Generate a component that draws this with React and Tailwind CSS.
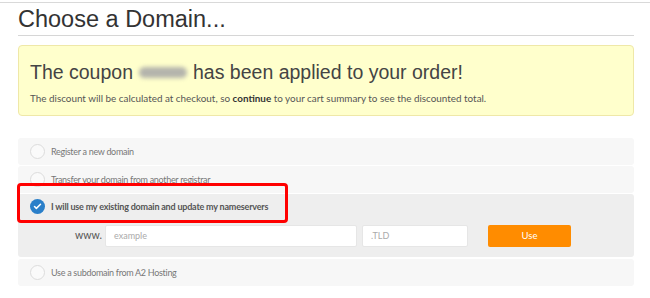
import { Check } from 'lucide-react';

const sans = { fontFamily: '"Liberation Sans", Arial, sans-serif' };
const body = { fontFamily: 'Lato, "Open Sans", sans-serif' };

function Radio({ checked }) {
  if (checked) {
    return (
      <div className="w-[15px] h-[15px] rounded-full bg-[#2a7fc9] flex items-center justify-center shrink-0">
        <Check className="w-[9px] h-[9px] text-white" strokeWidth={4} />
      </div>
    );
  }
  return <div className="w-[15px] h-[15px] rounded-full border border-[#dcdcdc] bg-[#fafafa] shrink-0" />;
}

function OptionRow({ label }) {
  return (
    <div className="h-[27px] bg-[#f7f7f7] rounded-[3px] flex items-center pl-[12px] gap-[6px]">
      <Radio />
      <span className="text-[9px] tracking-[-0.3px] text-[#777]">{label}</span>
    </div>
  );
}

export default function App() {
  return (
    <div className="w-[650px] h-[298px] bg-white overflow-hidden pt-[2px]" style={body}>
      <div className="border-t border-[#d9d9d9]" />
      <div className="ml-[18px] w-[616px]">
        <h1
          className="h-[33px] leading-[32px] text-[23.5px] text-[#333] border-b border-[#d6d6d6]"
          style={sans}
        >
          Choose a Domain...
        </h1>

        <div className="mt-[9px] h-[71px] border border-[#efe8a8] bg-[#ffffcc] rounded-[4px] pl-[11px] pt-[14px]">
          <div className="text-[19.5px] leading-[24px] text-[#444] flex items-center" style={sans}>
            <span>The coupon</span>
            <span className="mx-[6px] w-[48px] h-[11px] bg-[#b4b4ac] rounded-full blur-[2px]" />
            <span>has been applied to your order!</span>
          </div>
          <p className="mt-[8px] text-[9.9px] leading-[12px] text-[#555]">
            The discount will be calculated at checkout, so <b className="text-[#333]">continue</b> to your
            cart summary to see the discounted total.
          </p>
        </div>

        <div className="mt-[22px] flex flex-col">
          <OptionRow label="Register a new domain" />
          <div className="h-px" />
          <OptionRow label="Transfer your domain from another registrar" />
          <div className="h-px" />

          <div className="relative h-[63px] bg-[#eeeeee] rounded-[3px]">
            <div className="h-[25px] flex items-center pl-[12px] gap-[6px]">
              <Radio checked />
              <span className="text-[9px] tracking-[-0.2px] font-bold text-[#555]">
                I will use my existing domain and update my nameservers
              </span>
            </div>
            <div className="mt-[6px] flex items-center">
              <span className="w-[87px] text-right pr-[3px] text-[10.5px] text-[#555]">www.</span>
              <div className="w-[252px] h-[22px] bg-white border border-[#e6e6e6] rounded-[2px] pl-[8px] flex items-center text-[9px] text-[#aaa]">
                example
              </div>
              <div className="ml-[5px] w-[106px] h-[22px] bg-white border border-[#e6e6e6] rounded-[2px] pl-[8px] flex items-center text-[9px] text-[#aaa]">
                .TLD
              </div>
              <button className="ml-[20px] w-[83px] h-[22px] bg-[#ff8c00] rounded-[2px] text-white text-[9.5px]">
                Use
              </button>
            </div>
            <div className="absolute left-[-1px] top-[-11px] w-[271px] h-[40px] border-[3px] border-[#ff0000] rounded-[4px]" />
          </div>

          <div className="h-[2px]" />
          <OptionRow label="Use a subdomain from A2 Hosting" />
        </div>
      </div>
    </div>
  );
}
